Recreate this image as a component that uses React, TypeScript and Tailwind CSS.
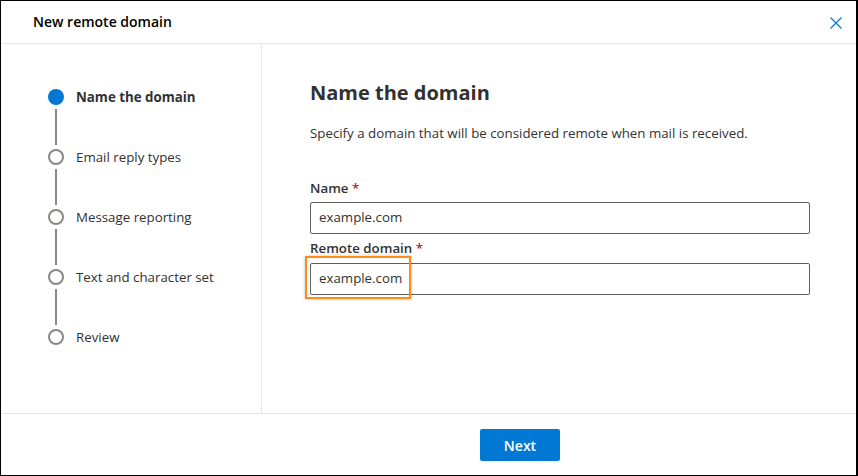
import React from "react";

const steps = [
  "Name the domain",
  "Email reply types",
  "Message reporting",
  "Text and character set",
  "Review",
];

export default function App() {
  return (
    <div
      className="w-[858px] h-[476px] bg-white border-l border-t border-b border-r-2 border-black flex flex-col text-[#323130]"
      style={{ fontFamily: '"Open Sans", "Noto Sans", sans-serif' }}
    >
      {/* Header */}
      <div className="h-[43px] shrink-0 border-b border-[#e5e5e5] flex items-center justify-between pl-8 pr-[14px]">
        <div className="text-[14px] font-semibold text-black leading-5">New remote domain</div>
        <svg width="12" height="12" viewBox="0 0 12 12" className="mt-[1px]">
          <path d="M0.5 0.5 L11.5 11.5 M11.5 0.5 L0.5 11.5" stroke="#0078d4" strokeWidth="1.2" fill="none" />
        </svg>
      </div>

      {/* Body */}
      <div className="flex-1 flex min-h-0">
        <div className="w-[261px] shrink-0 border-r border-[#e5e5e5] pl-[47px] pt-[45px]">
          {steps.map((s, i) => (
            <div key={s} className="flex">
              <div className="flex flex-col items-center w-4">
                {i === 0 ? (
                  <div className="w-4 h-4 rounded-full bg-[#0078d4]" />
                ) : (
                  <div className="w-4 h-4 rounded-full border-2 border-[#8a8886]" />
                )}
                {i < steps.length - 1 && <div className="w-[2px] h-[36px] my-[4px] bg-[#8a8886]" />}
              </div>
              <div
                className={`ml-3 text-[13.3px] leading-4 ${i === 0 ? "font-bold text-[#323130]" : "text-[#323130]"}`}
              >
                {s}
              </div>
            </div>
          ))}
        </div>

        <div className="flex-1 pl-[48px] pt-[35px] pr-[45px]">
          <h1 className="text-[20px] leading-7 font-bold text-[#323130]">Name the domain</h1>
          <p className="mt-4 text-[13.3px] leading-5 text-[#323130]">
            Specify a domain that will be considered remote when mail is received.
          </p>

          <div className="mt-[35px] text-[13.3px] leading-5 font-semibold text-[#323130]">
            Name <span className="text-[#a4262c]">*</span>
          </div>
          <div className="mt-1 w-[500px] h-[32px] border border-[#605e5c] rounded-[2px] flex items-center pl-2 text-[13.3px] text-[#323130]">
            example.com
          </div>

          <div className="mt-[4px] text-[13.3px] leading-5 font-semibold text-[#323130]">
            Remote domain <span className="text-[#a4262c]">*</span>
          </div>
          <div className="relative mt-[5px] w-[500px] h-[32px] border border-[#605e5c] rounded-[2px] flex items-center pl-2 text-[13.3px] text-[#323130]">
            example.com
            <div className="absolute left-[-6px] top-[-8px] w-[106px] h-[43px] border-2 border-[#ff8c1a] shadow-[0_0_3px_rgba(0,0,0,0.25)]" />
          </div>
        </div>
      </div>

      {/* Footer */}
      <div className="h-[62px] shrink-0 border-t border-[#e5e5e5] pl-[479px] pt-[15px]">
        <button className="w-[80px] h-[32px] bg-[#0078d4] rounded-[2px] text-white text-[14px] font-semibold">
          Next
        </button>
      </div>
    </div>
  );
}
